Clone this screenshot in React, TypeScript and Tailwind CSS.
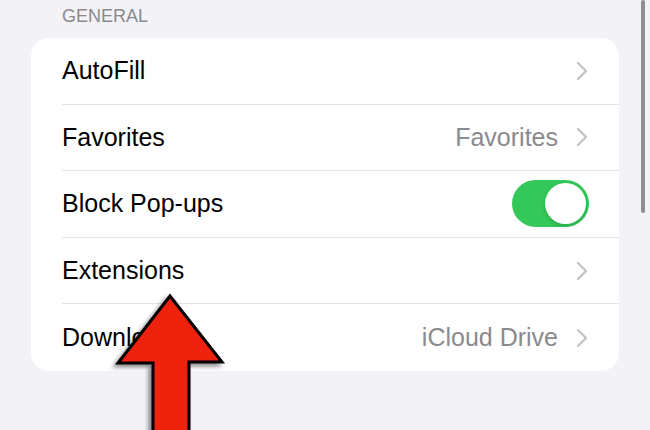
import React from "react"

const font = { fontFamily: '"Liberation Sans", Arial, sans-serif' }

const Chevron = () => (
  <svg width="12" height="20" viewBox="0 0 12 20" className="shrink-0">
    <path d="M2 2 L10 10 L2 18" fill="none" stroke="#c4c4c7" strokeWidth="2.4" strokeLinecap="round" strokeLinejoin="round" />
  </svg>
)

const Toggle = () => (
  <div className="w-[77px] h-[47px] rounded-full bg-[#34c759] flex items-center justify-end pr-[3px]">
    <div className="w-[41px] h-[41px] rounded-full bg-white shadow-[0_2px_4px_rgba(0,0,0,0.15)]" />
  </div>
)

type Row = { label: string; value?: string; toggle?: boolean }

const rows: Row[] = [
  { label: "AutoFill" },
  { label: "Favorites", value: "Favorites" },
  { label: "Block Pop-ups", toggle: true },
  { label: "Extensions" },
  { label: "Downloads", value: "iCloud Drive" },
]

const App = () => {
  return (
    <div className="relative w-[650px] h-[430px] overflow-hidden bg-[#f2f2f7]" style={font}>
      <div className="px-[31px] pt-[6px]">
        <div className="pl-[31px] text-[18px] leading-[20px] text-[#8a8a8e] tracking-[0px]">GENERAL</div>
        <div className="mt-[12px] bg-white rounded-[18px] overflow-hidden">
          {rows.map((row, i) => (
            <div key={i} className="pl-[31px]">
              <div className={"h-[66.6px] flex items-center justify-between pr-[30px] " + (i < rows.length - 1 ? "border-b border-[#e3e3e6]" : "")}>
                <span className="text-[25px] text-black">{row.label}</span>
                {row.toggle ? (
                  <Toggle />
                ) : (
                  <div className="flex items-center gap-[18px] pr-[1px]">
                    {row.value && <span className="text-[25px] text-[#8a8a8e]">{row.value}</span>}
                    <Chevron />
                  </div>
                )}
              </div>
            </div>
          ))}
        </div>
      </div>

      {/* scrollbar */}
      <div className="absolute right-[5px] top-0 w-[4px] h-[213px] rounded-full bg-[#8e8e93]" />

      {/* red arrow */}
      <svg className="absolute left-0 top-0" width="650" height="430">
        <defs>
          <filter id="sh" x="-20%" y="-20%" width="140%" height="140%">
            <feDropShadow dx="-3" dy="3" stdDeviation="2" floodColor="#000" floodOpacity="0.45" />
          </filter>
        </defs>
        <polygon
          points="170,296 222,362 189,362 189,445 153,445 153,363 118,363"
          fill="#ee2211"
          stroke="#000"
          strokeWidth="3"
          strokeLinejoin="miter"
          filter="url(#sh)"
        />
      </svg>
    </div>
  )
}

export default App
